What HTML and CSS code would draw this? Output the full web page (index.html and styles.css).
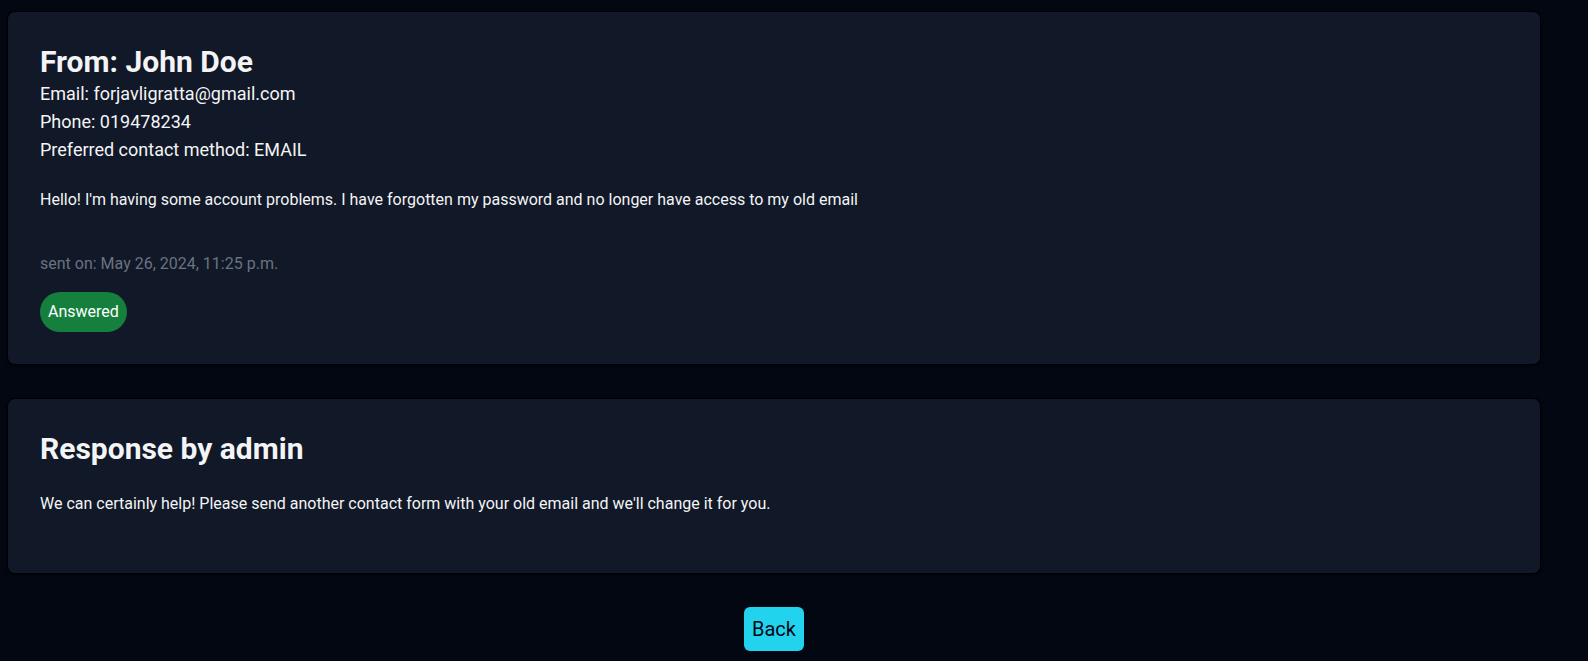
FILE: index.html
```html
<!DOCTYPE html>
<html lang="en">
<head>
<meta charset="utf-8">
<title>Contact message</title>
<link rel="stylesheet" href="styles.css">
</head>
<body>
<main class="page">
  <section class="card">
    <h2 class="title">From: John Doe</h2>
    <p class="meta">Email: forjavligratta@gmail.com</p>
    <p class="meta">Phone: 019478234</p>
    <p class="meta">Preferred contact method: EMAIL</p>
    <p class="message">Hello! I'm having some account problems. I have forgotten my password and no longer have access to my old email</p>
    <p class="sent">sent on: May 26, 2024, 11:25 p.m.</p>
    <span class="badge">Answered</span>
  </section>
  <section class="card">
    <h2 class="title">Response by admin</h2>
    <p class="message response">We can certainly help! Please send another contact form with your old email and we'll change it for you.</p>
  </section>
  <div class="actions">
    <button class="back" type="button">Back</button>
  </div>
</main>
</body>
</html>
```

FILE: styles.css
```css
* { box-sizing: border-box; }
html, body {
  margin: 0;
  background: #030712;
  color: #f3f4f6;
  font-family: Roboto, "Noto Sans", sans-serif;
}
.page {
  padding: 11px 47px 0 7px;
  display: flex;
  flex-direction: column;
}
.card {
  background: #111827;
  border: 1px solid #000000;
  border-radius: 8px;
  padding: 32px;
  margin-bottom: 33px;
  display: flex;
  flex-direction: column;
  align-items: flex-start;
  box-shadow: 0 1px 3px rgba(0,0,0,0.5);
}
.title {
  margin: 0;
  font-size: 30px;
  line-height: 36px;
  font-weight: 700;
  color: #f3f4f6;
}
.meta {
  margin: 0;
  font-size: 18px;
  line-height: 28px;
}
.message {
  margin: 24px 0 40px;
  font-size: 16px;
  line-height: 24px;
}
.message.response {
  margin: 25px 0 25px;
}
.sent {
  margin: 0 0 16px;
  font-size: 16px;
  line-height: 24px;
  color: #6b7280;
}
.badge {
  background: #15803d;
  color: #ffffff;
  font-size: 16px;
  line-height: 24px;
  padding: 8px 8px;
  border-radius: 9999px;
}
.actions {
  display: flex;
  justify-content: center;
}
.back {
  background: #22d3ee;
  color: #030712;
  border: none;
  font-family: Roboto, "Noto Sans", sans-serif;
  font-size: 20px;
  line-height: 28px;
  padding: 8px 8px;
  border-radius: 6px;
  cursor: pointer;
}
```
